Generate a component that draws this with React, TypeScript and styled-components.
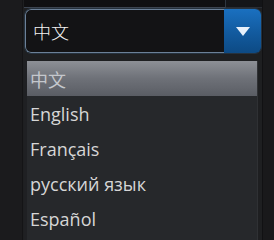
import {type FC} from "react";
import styled, {createGlobalStyle} from "styled-components";

const languages = ["中文", "English", "Français", "русский язык", "Español"];

const App: FC = () => {
    const selected = "中文";

    return (
        <>
            <GlobalStyle/>
            <Page>
                <Gutter/>
                <Column>
                    <TopStrip>
                        <TopField/>
                        <TopButton/>
                    </TopStrip>

                    <Select>
                        <SelectValue>{selected}</SelectValue>
                        <ArrowButton>
                            <svg width="14" height="9" viewBox="0 0 14 9">
                                <path d="M0 0 L14 0 L7 9 Z" fill="#e8f1fb"/>
                            </svg>
                        </ArrowButton>
                    </Select>

                    <Menu>
                        {languages.map(lang => (
                            <MenuItem key={lang} $active={lang === selected}>
                                {lang}
                            </MenuItem>
                        ))}
                    </Menu>
                </Column>
                <RightEdge/>
            </Page>
        </>
    );
};

export default App;

const GlobalStyle = createGlobalStyle`
    html, body {
        margin: 0;
        padding: 0;
        background: #1d1e20;
    }

    body {
        font-family: "Open Sans", "Noto Sans", "Noto Sans CJK SC", sans-serif;
    }
`;

const Page = styled.div`
    width: 274px;
    height: 240px;

    display: flex;

    overflow: hidden;
    background: #1e1f21;
`;

const Gutter = styled.div`
    width: 22px;
    flex-shrink: 0;

    background: #1b1b1d;
    border-right: 1px solid #141416;
`;

const Column = styled.div`
    width: 238px;
    margin-left: 1px;

    display: flex;
    flex-direction: column;
`;

const TopStrip = styled.div`
    height: 8px;

    display: flex;
`;

const TopField = styled.div`
    flex: 1;

    background: #101012;
    border-bottom: 1px solid #3c4450;
    border-right: 1px solid #2e3640;
`;

const TopButton = styled.div`
    width: 36px;

    background: #141518;
    border-bottom: 1px solid #2a2d33;
`;

const Select = styled.div`
    height: 46px;

    display: flex;

    border-radius: 7px;
    overflow: hidden;

    box-sizing: border-box;
    border: 1px solid #26323e;
`;

const SelectValue = styled.div`
    flex: 1;

    display: flex;
    align-items: center;

    padding-left: 7px;

    background: #131315;
    border: 1px solid #6b8098;
    border-right: none;
    border-radius: 6px 0 0 6px;

    font-family: "Noto Sans CJK SC", sans-serif;
    font-size: 18px;
    font-weight: 300;
    color: #f2f2f2;
`;

const ArrowButton = styled.div`
    width: 37px;

    display: flex;
    align-items: center;
    justify-content: center;

    background: linear-gradient(180deg, #1a70c0 0%, #125a9e 55%, #0d4a84 100%);
`;

const Menu = styled.div`
    flex: 1;
    margin-top: 7px;
    width: 234px;

    display: flex;
    flex-direction: column;

    background: #26282b;
    border-left: 3px solid #1f2023;
    border-right: 1px solid #2f3134;
    box-sizing: border-box;
`;

const MenuItem = styled.div<{ $active?: boolean }>`
    height: 35px;
    flex-shrink: 0;

    display: flex;
    align-items: center;

    padding-left: 3px;

    font-family: "Open Sans", "Noto Sans CJK SC", sans-serif;
    font-size: 18px;
    color: ${p => p.$active ? "#c4c7cc" : "#d6d6d6"};

    background: ${p => p.$active
            ? "linear-gradient(180deg, #8d9096 0%, #6e7178 50%, #5a5d64 100%)"
            : "transparent"};
`;

const RightEdge = styled.div`
    flex: 1;

    background: #19191b;
    border-left: 1px solid #111113;
`;
